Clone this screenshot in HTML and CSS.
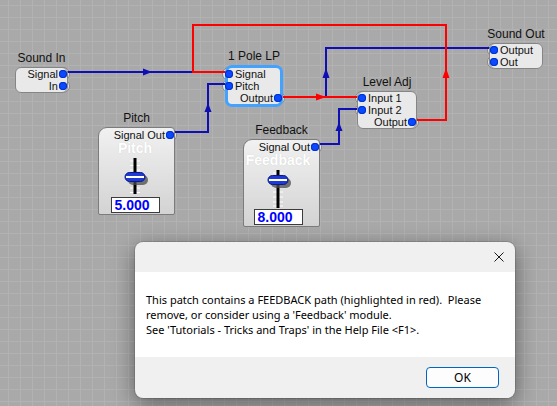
FILE: index.html
```html
<!DOCTYPE html>
<html lang="en">
<head>
    <meta charset="UTF-8">
    <title>Patch Editor</title>
    <link rel="stylesheet" href="styles.css">
</head>
<body>
    <div class="canvas">
        <svg class="wires" width="557" height="406" viewBox="0 0 557 406">
            <g class="wire-blue">
                <path d="M67 72 H230"/>
                <path d="M175 132 H208 V84 H230"/>
                <path d="M326 97 V48 H494"/>
                <path d="M320 144 H339 V109 H361"/>
            </g>
            <g class="wire-red">
                <path d="M412 120 H446 V25 H193 V72 H230"/>
                <path d="M280 97 H362"/>
            </g>
            <g class="arrow-blue">
                <polygon points="143,68.5 152,72 143,75.5"/>
                <polygon points="204.5,112 208,103 211.5,112"/>
                <polygon points="322.5,78 326,68 329.5,78"/>
                <polygon points="335.5,131 339,122 342.5,131"/>
            </g>
            <g class="arrow-red">
                <polygon points="316,93.5 326,97 316,100.5"/>
                <polygon points="442.5,78 446,68 449.5,78"/>
            </g>
        </svg>

        <!-- modules -->
        <div class="node sound-in">
            <div class="node-label">Sound In</div>
            <div class="box">
                <div class="port out"><span>Signal</span><i class="dot"></i></div>
                <div class="port out"><span>In</span><i class="dot"></i></div>
            </div>
        </div>

        <div class="node pole-lp">
            <div class="node-label">1 Pole LP</div>
            <div class="box selected">
                <div class="port in"><i class="dot"></i><span>Signal</span></div>
                <div class="port in"><i class="dot"></i><span>Pitch</span></div>
                <div class="port out"><span>Output</span><i class="dot"></i></div>
            </div>
        </div>

        <div class="node level-adj">
            <div class="node-label">Level Adj</div>
            <div class="box">
                <div class="port in"><i class="dot"></i><span>Input 1</span></div>
                <div class="port in"><i class="dot"></i><span>Input 2</span></div>
                <div class="port out"><span>Output</span><i class="dot"></i></div>
            </div>
        </div>

        <div class="node sound-out">
            <div class="node-label">Sound Out</div>
            <div class="box">
                <div class="port in"><i class="dot"></i><span>Output</span></div>
                <div class="port in"><i class="dot"></i><span>Out</span></div>
            </div>
        </div>

        <div class="node pitch">
            <div class="node-label">Pitch</div>
            <div class="panel">
                <div class="port out"><span>Signal Out</span><i class="dot"></i></div>
                <div class="panel-body">
                    <div class="panel-title">Pitch</div>
                    <svg class="slider" width="30" height="40" viewBox="0 0 30 40">
                        <g class="ticks">
                            <path d="M10 5h4M16 5h4M10 9.5h4M16 9.5h4M10 14h4M16 14h4M10 18.5h4M16 18.5h4M10 23h4M16 23h4M10 27.5h4M16 27.5h4M10 32h4M16 32h4M10 36.5h4M16 36.5h4"/>
                        </g>
                        <rect class="track" x="13.5" y="2" width="3" height="36"/>
                        <rect class="knob-shadow" x="8" y="19" width="20" height="10" rx="5"/>
                        <rect class="knob" x="5" y="16.5" width="20" height="9" rx="4.5"/>
                        <rect class="knob-line" x="6" y="20" width="18" height="2"/>
                    </svg>
                    <div class="value">5.000</div>
                </div>
            </div>
        </div>

        <div class="node feedback">
            <div class="node-label">Feedback</div>
            <div class="panel">
                <div class="port out"><span>Signal Out</span><i class="dot"></i></div>
                <div class="panel-body">
                    <div class="panel-title">Feedback</div>
                    <svg class="slider" width="30" height="40" viewBox="0 0 30 40">
                        <g class="ticks">
                            <path d="M10 5h4M16 5h4M10 19h4M16 19h4M10 24h4M16 24h4M10 29h4M16 29h4M10 34h4M16 34h4M10 38h4M16 38h4"/>
                        </g>
                        <rect class="track" x="13.5" y="2" width="3" height="38"/>
                        <rect class="knob-shadow" x="8" y="10" width="20" height="10" rx="5"/>
                        <rect class="knob" x="5" y="7.5" width="20" height="9" rx="4.5"/>
                        <rect class="knob-line" x="6" y="11" width="18" height="2"/>
                    </svg>
                    <div class="value">8.000</div>
                </div>
            </div>
        </div>

        <!-- warning dialog -->
        <div class="dialog">
            <div class="dialog-title">
                <svg class="close" width="10" height="10" viewBox="0 0 10 10">
                    <path d="M0.5 0.5 L9.5 9.5 M9.5 0.5 L0.5 9.5"/>
                </svg>
            </div>
            <div class="dialog-body">
                <p>This patch contains a FEEDBACK path (highlighted in red).&nbsp; Please<br>
                remove, or consider using a 'Feedback' module.<br>
                See 'Tutorials - Tricks and Traps' in the Help File &lt;F1&gt;.</p>
            </div>
            <div class="dialog-footer">
                <button class="ok">OK</button>
            </div>
        </div>
    </div>
</body>
</html>
```

FILE: styles.css
```css
body {
    margin: 0;
    overflow: hidden;
    font-family: "Liberation Sans", Arial, sans-serif;
}

.canvas {
    position: relative;
    z-index: 0;
    width: 557px;
    height: 406px;
    overflow: hidden;
    background-color: #a9a9a9;
    background-image:
        linear-gradient(to right, #b2b2b2 1px, transparent 1px),
        linear-gradient(to bottom, #b2b2b2 1px, transparent 1px);
    background-size: 12px 12px;
    background-position: 8px 5px;
}

.wires {
    position: absolute;
    left: 0;
    top: 0;
}

.wire-blue path {
    fill: none;
    stroke: #0f0fb4;
    stroke-width: 2;
}

.wire-red path {
    fill: none;
    stroke: #ff0000;
    stroke-width: 2;
}

.arrow-blue polygon { fill: #0f0fb4; }
.arrow-red polygon { fill: #ff0000; }

/* modules on the patch canvas */
.node {
    position: absolute;
    display: flex;
    flex-direction: column;
    align-items: center;
}

.node-label {
    font-size: 12px;
    line-height: 14px;
    height: 14px;
    margin-bottom: 2px;
    color: #111;
    white-space: nowrap;
}

.sound-in { left: 15px; top: 51px; width: 53px; }
.pole-lp { left: 225px; top: 49px; width: 58px; }
.level-adj { left: 357px; top: 75px; width: 60px; }
.sound-out { left: 489px; top: 27px; width: 54px; }
.pitch { left: 98px; top: 111px; width: 77px; }
.feedback { left: 243px; top: 123px; width: 77px; }

.box {
    position: relative;
    box-sizing: border-box;
    width: 100%;
    border: 1px solid #858585;
    border-radius: 6px;
    background: #e9e9e9;
}

.box.selected {
    border: 3px solid #42a2ff;
    border-radius: 7px;
}

.box.selected .port.in { margin-left: -3px; }
.box.selected .port.out { margin-right: -2px; }

.port {
    display: flex;
    align-items: center;
    height: 12px;
    font-size: 11px;
    color: #111;
    white-space: nowrap;
}

.port.in {
    justify-content: flex-start;
    gap: 2px;
}

.port.out {
    justify-content: flex-end;
    gap: 1px;
}

.dot {
    position: relative;
    flex: none;
    width: 8px;
    height: 8px;
    border-radius: 50%;
    background: #0b49ff;
    box-shadow: inset 0 0 0 1px #0030c8;
}

.dot::before {
    content: "";
    position: absolute;
    left: -3px;
    top: -3px;
    width: 12px;
    height: 12px;
    border-radius: 50%;
    background: #e9e9e9;
    border: 1px solid #858585;
    z-index: -1;
}

/* slider modules */
.panel {
    position: relative;
    box-sizing: border-box;
    width: 100%;
    height: 88px;
    border: 1px solid #7c7c7c;
    border-radius: 9px 4px 2px 2px;
    background: linear-gradient(#f1f1f1, #d3d3d3);
}

.panel .port { margin-top: 1px; }
.panel .dot::before { background: #efefef; }

.panel-body {
    display: flex;
    flex-direction: column;
    align-items: center;
    padding-right: 3px;
}

.feedback .panel-body { padding-right: 7px; }

.panel-title {
    font-size: 14px;
    font-weight: bold;
    line-height: 15px;
    color: #fff;
    text-shadow: 0 0 1px #c8c8c8;
}

.slider { display: block; }

.ticks path {
    stroke: #fff;
    stroke-width: 1;
}

.track { fill: #000; }
.knob-shadow { fill: #4a4a4a; opacity: 0.75; }
.knob { fill: #1d3ad6; stroke: #0a1a80; stroke-width: 1; }
.knob-line { fill: #fff; }

.value {
    box-sizing: border-box;
    width: 49px;
    height: 16px;
    margin-top: 1px;
    padding-left: 3px;
    border: 1px solid #3c3c3c;
    background: #fff;
    color: #0000ff;
    font-size: 14px;
    font-weight: bold;
    line-height: 14px;
}

/* message box */
.dialog {
    position: absolute;
    left: 135px;
    top: 242px;
    width: 380px;
    height: 156px;
    display: flex;
    flex-direction: column;
    border-radius: 8px;
    overflow: hidden;
    background: #f0f0f0;
    box-shadow: 0 0 0 1px rgba(0, 0, 0, 0.12), 0 6px 22px rgba(0, 0, 0, 0.45);
}

.dialog-title {
    height: 30px;
    display: flex;
    justify-content: flex-end;
    align-items: center;
    padding-right: 11px;
}

.close path {
    stroke: #1a1a1a;
    stroke-width: 1;
    fill: none;
}

.dialog-body {
    height: 85px;
    box-sizing: border-box;
    padding: 20px 11px 0;
    background: #fff;
}

.dialog-body p {
    margin: 0;
    font-family: "Noto Sans", sans-serif;
    font-size: 11px;
    line-height: 15px;
    white-space: nowrap;
    color: #000;
}

.dialog-footer {
    flex: 1;
    display: flex;
    justify-content: flex-end;
    align-items: flex-start;
    padding: 10px 16px 0 0;
}

.ok {
    width: 73px;
    height: 21px;
    border: 1px solid #0067c0;
    border-radius: 4px;
    background: #fdfdfd;
    color: #000;
    font-family: "Noto Sans", sans-serif;
    font-size: 12px;
    line-height: 19px;
    padding: 0;
}
```
